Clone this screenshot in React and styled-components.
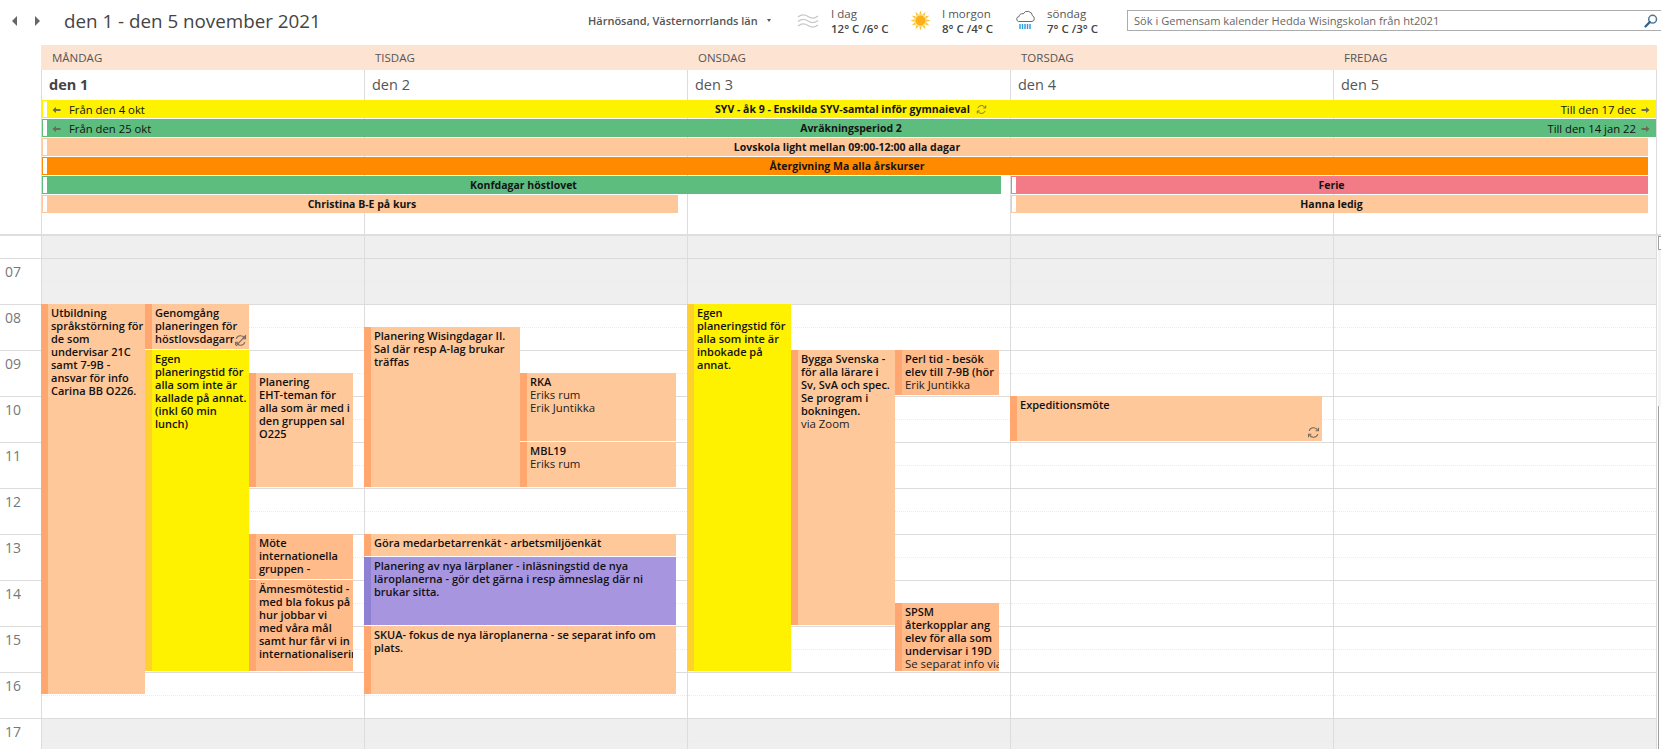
import React from "react";
import styled, { createGlobalStyle } from "styled-components";

const HOUR = 46;
const COL = 323;
const TRACK = 312;
const GRID_TOP = 236;

const yOf = (h) => 304 + (h - 8) * HOUR - GRID_TOP;

const Global = createGlobalStyle`
  html, body { margin:0; padding:0; background:#fff; }
  body { font-family:"Open Sans","Noto Sans",sans-serif; color:#222; }
`;

const Page = styled.div`
  width:1661px;
  height:749px;
  overflow:hidden;
  background:#fff;
`;

const Toolbar = styled.div`
  height:45px;
  box-sizing:border-box;
  padding-bottom:4px;
  display:flex;
  align-items:center;
`;

const Nav = styled.div`
  width:64px;
  flex:none;
  display:flex;
  gap:16px;
  padding-left:11px;
  box-sizing:border-box;
  color:#666;
`;

const Title = styled.h1`
  margin:0;
  width:524px;
  flex:none;
  font-size:18.8px;
  font-weight:400;
  color:#444;
  white-space:nowrap;
`;

const Location = styled.div`
  width:209px;
  flex:none;
  font-size:11px;
  font-weight:600;
  color:#555;
  white-space:nowrap;
  display:flex;
  align-items:center;
  gap:9px;
`;

const Caret = styled.span`
  width:0;
  height:0;
  border-left:2.5px solid transparent;
  border-right:2.5px solid transparent;
  border-top:3px solid #555;
`;

const Weather = styled.div`
  width:${(p) => p.$width}px;
  flex:none;
  display:flex;
  align-items:center;
`;

const WeatherIcon = styled.div`
  width:${(p) => p.$width}px;
  flex:none;
  display:flex;
`;

const WeatherText = styled.div`
  font-size:11.5px;
  line-height:15px;
  color:#555;
  white-space:nowrap;
  b { font-weight:600; color:#444; }
`;

const Search = styled.div`
  flex:1;
  height:21px;
  box-sizing:border-box;
  border:1px solid #acacac;
  border-right:none;
  display:flex;
  align-items:center;
  justify-content:space-between;
  padding:0 3px 0 6px;
  font-size:11.1px;
  color:#666;
  white-space:nowrap;
`;

const Head = styled.div`
  margin-left:41px;
  width:1616px;
`;

const NameRow = styled.div`
  height:25px;
  display:grid;
  grid-template-columns:repeat(5, ${COL}px);
  background:#fde3d2;
`;

const DayName = styled.div`
  padding-left:11px;
  font-size:11.5px;
  line-height:25px;
  color:#555;
`;

const DateRow = styled.div`
  height:30px;
  display:grid;
  grid-template-columns:repeat(5, ${COL}px);
  border-right:1px solid #dcdcdc;
  background-image:linear-gradient(to right, #dcdcdc 1px, transparent 1px);
  background-size:${COL}px 100%;
`;

const DayDate = styled.div`
  padding-left:8px;
  font-size:14.5px;
  line-height:30px;
  font-weight:${(p) => (p.$today ? 700 : 400)};
  color:${(p) => (p.$today ? "#444" : "#555")};
`;

const AllDay = styled.div`
  height:134px;
  box-sizing:border-box;
  display:grid;
  grid-template-columns:repeat(5, ${COL}px);
  grid-auto-rows:18px;
  row-gap:1px;
  border-right:1px solid #dcdcdc;
  background-image:linear-gradient(to right, #dcdcdc 1px, transparent 1px);
  background-size:${COL}px 100%;
`;

const Bar = styled.div`
  grid-column:${(p) => p.$from} / ${(p) => p.$to};
  margin-left:1px;
  margin-right:${(p) => p.$gap || 0}px;
  display:flex;
  background:${(p) => p.$color};
  overflow:hidden;
`;

const BarTab = styled.span`
  width:6px;
  flex:none;
  box-sizing:border-box;
  background:#fff;
  border:1px solid ${(p) => p.$color};
`;

const BarBody = styled.div`
  flex:1;
  display:grid;
  grid-template-columns:1fr auto 1fr;
  align-items:center;
  padding:1px 6px 0 4px;
  font-size:10.5px;
  line-height:17px;
  color:#111;
  white-space:nowrap;
`;

const BarTitle = styled.span`
  font-weight:700;
  color:#141414;
  display:flex;
  align-items:center;
  gap:6px;
`;

const BarSide = styled.span`
  display:flex;
  align-items:center;
  gap:${(p) => (p.$right ? 5 : 8)}px;
  font-size:11.3px;
  justify-content:${(p) => (p.$right ? "flex-end" : "flex-start")};
  svg { color:#6b6b55; flex:none; }
`;

const TimeGrid = styled.div`
  display:flex;
  border-top:2px solid #dedede;
`;

const Gutter = styled.div`
  width:41px;
  flex:none;
`;

const HourLabel = styled.div`
  height:${(p) => (p.$short ? 22 : HOUR)}px;
  box-sizing:border-box;
  border-top:${(p) => (p.$short ? "none" : "1px solid #dcdcdc")};
  padding-left:5px;
  font-size:14px;
  line-height:26px;
  color:#777;
`;

const Days = styled.div`
  display:flex;
`;

const DayColumn = styled.div`
  position:relative;
  width:${COL}px;
  box-sizing:border-box;
  border-left:1px solid #dcdcdc;
`;

const Slot = styled.div`
  height:${(p) => (p.$short ? 22 : HOUR)}px;
  box-sizing:border-box;
  border-top:${(p) => (p.$short ? "none" : "1px solid #dcdcdc")};
  background:${(p) => (p.$off ? "#efefef" : "#fff")};
  &::before {
    content:"";
    display:${(p) => (p.$short ? "none" : "block")};
    height:22px;
    border-bottom:1px dotted ${(p) => (p.$off ? "#ebebeb" : "#ececec")};
  }
`;

const Event = styled.div`
  position:absolute;
  top:${(p) => yOf(p.$start)}px;
  height:${(p) => (p.$end - p.$start) * HOUR - 1}px;
  left:${(p) => -1 + (p.$lane * TRACK) / p.$lanes}px;
  width:${(p) => ((p.$span || 1) * TRACK) / p.$lanes}px;
  box-sizing:border-box;
  padding:2px 0 0 3px;
  border-left:7px solid ${(p) => p.$accent};
  background:${(p) => p.$color};
  overflow:hidden;
  font-size:11px;
  line-height:13px;
  color:#111;
`;

const EventLine = styled.div`
  white-space:nowrap;
  font-weight:${(p) => (p.$sub ? 400 : 600)};
  font-size:${(p) => (p.$sub ? 11.4 : 11)}px;
  color:${(p) => (p.$sub ? "#222" : "#111")};
`;

const EventIcon = styled.span`
  position:absolute;
  right:2px;
  bottom:2px;
  display:flex;
  background:${(p) => p.$color};
`;

const ScrollBar = styled.div`
  flex:1;
  display:flex;
  flex-direction:column;
  padding-left:1px;
  border-left:1px solid #dcdcdc;
`;

const ScrollButton = styled.div`
  height:14px;
  box-sizing:border-box;
  border:1px solid #a0a0a0;
  border-right:none;
`;

const ScrollTrack = styled.div`
  height:156px;
  background:#f4f4f4;
`;

const ScrollThumb = styled.div`
  flex:1;
  height:400px;
  border-left:1px solid #a0a0a0;
  background:#fff;
`;

const Arrow = ({ dir }) => (
  <svg width="9" height="8" viewBox="0 0 9 8">
    <path
      d={dir === "left" ? "M0.5 4 L4 1 V3 H8.5 V5 H4 V7 Z" : "M8.5 4 L5 1 V3 H0.5 V5 H5 V7 Z"}
      fill="currentColor"
    />
  </svg>
);

const Repeat = ({ size = 11, color = "#6d6d4e", broken }) => (
  <svg width={size} height={size} viewBox="0 0 12 12" fill="none" stroke={color} strokeWidth="1">
    <path d="M2 4.5 A4.3 4.3 0 0 1 9.8 3.8" />
    <path d="M10 7.5 A4.3 4.3 0 0 1 2.2 8.2" />
    <path d="M10.6 1.6 V4.4 H7.9" />
    <path d="M1.4 10.4 V7.6 H4.1" />
    {broken && <path d="M2 11 L11 1" />}
  </svg>
);

const Waves = () => (
  <svg width="22" height="16" viewBox="0 0 22 16" fill="none" stroke="#c9c9c9" strokeWidth="1.4">
    <path d="M1 4 Q6 0 11 3.5 T21 3" />
    <path d="M1 8.5 Q6 4.5 11 8 T21 7.5" />
    <path d="M1 13 Q6 9 11 12.5 T21 12" />
  </svg>
);

const Sun = () => (
  <svg width="21" height="21" viewBox="0 0 21 21">
    {[...Array(12)].map((_, i) => (
      <path key={i} d="M9.2 4.6 L10.5 0.4 L11.8 4.6 Z" fill="#fdc52c" transform={`rotate(${i * 30} 10.5 10.5)`} />
    ))}
    <circle cx="10.5" cy="10.5" r="5.4" fill="#fbb117" stroke="#fdd65a" strokeWidth="1" />
  </svg>
);

const RainCloud = () => (
  <svg width="21" height="21" viewBox="0 0 21 21" fill="none">
    <path
      d="M3.5 11.5 H17 A3 3 0 0 0 17.5 5.8 A5 5 0 0 0 8.2 3.8 A3.2 3.2 0 0 0 4 6.6 A2.5 2.5 0 0 0 3.5 11.5 Z"
      stroke="#6b6b6b"
      strokeWidth="1"
    />
    {[5, 7.5, 10, 12.5, 15].map((x) => (
      <path key={x} d={`M${x} 14 V19`} stroke="#2c9bd6" strokeWidth="1.4" />
    ))}
  </svg>
);

const Magnifier = () => (
  <svg width="14" height="14" viewBox="0 0 14 14" fill="none">
    <circle cx="8.6" cy="5.2" r="3.9" stroke="#4d7796" strokeWidth="1.5" />
    <path d="M5.8 8 L1.5 12.4" stroke="#2f5f85" strokeWidth="2.2" strokeLinecap="round" />
  </svg>
);

const NavArrow = ({ flip }) => (
  <svg width="7" height="10" viewBox="0 0 7 10">
    <path d={flip ? "M1 0 L6 5 L1 10 Z" : "M6 0 L1 5 L6 10 Z"} fill="currentColor" />
  </svg>
);

const PEACH = { $color: "#ffc89b", $accent: "#ffa76e" };
const SALMON = { $color: "#ffbb8a", $accent: "#ffa671" };
const YELLOW = { $color: "#fff200", $accent: "#ffd02e" };
const PURPLE = { $color: "#a895e0", $accent: "#8e80d2" };

const GREEN_BAR = "#5cbd7f";
const YELLOW_BAR = "#fff200";
const PEACH_BAR = "#ffc89b";
const ORANGE_BAR = "#ff8a00";
const PINK_BAR = "#f37a87";

const names = ["MÅNDAG", "TISDAG", "ONSDAG", "TORSDAG", "FREDAG"];
const dates = ["den 1", "den 2", "den 3", "den 4", "den 5"];

const bars = [
  { from: 1, to: 6, color: YELLOW_BAR, title: "SYV - åk 9 - Enskilda SYV-samtal inför gymnaieval", left: "Från den 4 okt", right: "Till den 17 dec", repeat: true },
  { from: 1, to: 6, color: GREEN_BAR, title: "Avräkningsperiod 2", left: "Från den 25 okt", right: "Till den 14 jan 22" },
  { from: 1, to: 6, gap: 8, color: PEACH_BAR, title: "Lovskola light mellan 09:00-12:00 alla dagar" },
  { from: 1, to: 6, gap: 8, color: ORANGE_BAR, title: "Återgivning Ma alla årskurser" },
  { from: 1, to: 4, gap: 9, color: GREEN_BAR, title: "Konfdagar höstlovet" },
  { from: 4, to: 6, gap: 8, color: PINK_BAR, title: "Ferie" },
  { from: 1, to: 3, gap: 9, color: PEACH_BAR, title: "Christina B-E på kurs" },
  { from: 4, to: 6, gap: 8, color: PEACH_BAR, title: "Hanna ledig" },
];

const events = [
  [
    { start: 8, end: 16.5, lane: 0, lanes: 3, kind: PEACH, lines: ["Utbildning", "språkstörning för", "de som", "undervisar 21C", "samt 7-9B -", "ansvar för info", "Carina BB O226."] },
    { start: 8, end: 9, lane: 1, lanes: 3, kind: PEACH, lines: ["Genomgång", "planeringen för", "höstlovsdagarna"], icon: "broken" },
    { start: 9, end: 16, lane: 1, lanes: 3, kind: YELLOW, lines: ["Egen", "planeringstid för", "alla som inte är", "kallade på annat.", "(inkl 60 min", "lunch)"] },
    { start: 9.5, end: 12, lane: 2, lanes: 3, kind: PEACH, lines: ["Planering", "EHT-teman för", "alla som är med i", "den gruppen sal", "O225"] },
    { start: 13, end: 14, lane: 2, lanes: 3, kind: SALMON, lines: ["Möte", "internationella", "gruppen -"] },
    { start: 14, end: 16, lane: 2, lanes: 3, kind: SALMON, lines: ["Ämnesmötestid -", "med bla fokus på", "hur jobbar vi", "med våra mål", "samt hur får vi in", "internationalisering"] },
  ],
  [
    { start: 8.5, end: 12, lane: 0, lanes: 2, kind: PEACH, lines: ["Planering Wisingdagar II.", "Sal där resp A-lag brukar", "träffas"] },
    { start: 9.5, end: 11, lane: 1, lanes: 2, kind: PEACH, lines: ["RKA"], sub: ["Eriks rum", "Erik Juntikka"] },
    { start: 11, end: 12, lane: 1, lanes: 2, kind: PEACH, lines: ["MBL19"], sub: ["Eriks rum"] },
    { start: 13, end: 13.5, lane: 0, lanes: 2, span: 2, kind: PEACH, lines: ["Göra medarbetarrenkät - arbetsmiljöenkät"] },
    { start: 13.5, end: 15, lane: 0, lanes: 2, span: 2, kind: PURPLE, lines: ["Planering av nya lärplaner - inläsningstid de nya", "läroplanerna - gör det gärna i resp ämneslag där ni", "brukar sitta."] },
    { start: 15, end: 16.5, lane: 0, lanes: 2, span: 2, kind: PEACH, lines: ["SKUA- fokus de nya läroplanerna - se separat info om", "plats."] },
  ],
  [
    { start: 8, end: 16, lane: 0, lanes: 3, kind: YELLOW, lines: ["Egen", "planeringstid för", "alla som inte är", "inbokade på", "annat."] },
    { start: 9, end: 15, lane: 1, lanes: 3, kind: PEACH, lines: ["Bygga Svenska -", "för alla lärare i", "Sv, SvA och spec.", "Se program i", "bokningen."], sub: ["via Zoom"] },
    { start: 9, end: 10, lane: 2, lanes: 3, kind: SALMON, lines: ["Perl tid - besök", "elev till 7-9B (hör"], sub: ["Erik Juntikka"] },
    { start: 14.5, end: 16, lane: 2, lanes: 3, kind: SALMON, lines: ["SPSM", "återkopplar ang", "elev för alla som", "undervisar i 19D"], sub: ["Se separat info via"] },
  ],
  [
    { start: 10, end: 11, lane: 0, lanes: 1, kind: PEACH, lines: ["Expeditionsmöte"], icon: "repeat" },
  ],
  [],
];

const hours = [
  { off: true, short: true, label: "" },
  { off: true, label: "07" },
  { label: "08" },
  { label: "09" },
  { label: "10" },
  { label: "11" },
  { label: "12" },
  { label: "13" },
  { label: "14" },
  { label: "15" },
  { label: "16" },
  { off: true, label: "17" },
];

export default function App() {
  return (
    <Page>
      <Global />
      <Toolbar>
        <Nav>
          <NavArrow />
          <NavArrow flip />
        </Nav>
        <Title>den 1 - den 5 november 2021</Title>
        <Location>
          Härnösand, Västernorrlands län
          <Caret />
        </Location>
        <Weather $width={113}>
          <WeatherIcon $width={34}><Waves /></WeatherIcon>
          <WeatherText>I dag<br /><b>12° C /6° C</b></WeatherText>
        </Weather>
        <Weather $width={105}>
          <WeatherIcon $width={32}><Sun /></WeatherIcon>
          <WeatherText>I morgon<br /><b>8° C /4° C</b></WeatherText>
        </Weather>
        <Weather $width={112}>
          <WeatherIcon $width={32}><RainCloud /></WeatherIcon>
          <WeatherText>söndag<br /><b>7° C /3° C</b></WeatherText>
        </Weather>
        <Search>
          Sök i Gemensam kalender Hedda Wisingskolan från ht2021
          <Magnifier />
        </Search>
      </Toolbar>

      <Head>
        <NameRow>
          {names.map((n) => <DayName key={n}>{n}</DayName>)}
        </NameRow>
        <DateRow>
          {dates.map((d, i) => <DayDate key={d} $today={i === 0}>{d}</DayDate>)}
        </DateRow>
        <AllDay>
          {bars.map((b) => (
            <Bar key={b.title} $from={b.from} $to={b.to} $gap={b.gap} $color={b.color}>
              <BarTab $color={b.color} />
              <BarBody>
                <BarSide>
                  {b.left && <><Arrow dir="left" />{b.left}</>}
                </BarSide>
                <BarTitle>
                  {b.title}
                  {b.repeat && <Repeat />}
                </BarTitle>
                <BarSide $right>
                  {b.right && <>{b.right}<Arrow dir="right" /></>}
                </BarSide>
              </BarBody>
            </Bar>
          ))}
        </AllDay>
      </Head>

      <TimeGrid>
        <Gutter>
          {hours.map((h, i) => (
            <HourLabel key={i} $short={h.short}>{h.label}</HourLabel>
          ))}
        </Gutter>
        <Days>
          {events.map((list, d) => (
            <DayColumn key={d}>
              {hours.map((h, i) => <Slot key={i} $off={h.off} $short={h.short} />)}
              {list.map((e) => (
                <Event
                  key={e.lines[0] + e.start}
                  $start={e.start}
                  $end={e.end}
                  $lane={e.lane}
                  $lanes={e.lanes}
                  $span={e.span}
                  {...e.kind}
                >
                  {e.lines.map((l) => <EventLine key={l}>{l}</EventLine>)}
                  {e.sub && e.sub.map((l) => <EventLine key={l} $sub>{l}</EventLine>)}
                  {e.icon && (
                    <EventIcon $color={e.kind.$color}>
                      <Repeat size={13} color="#7a6a5a" broken={e.icon === "broken"} />
                    </EventIcon>
                  )}
                </Event>
              ))}
            </DayColumn>
          ))}
        </Days>
        <ScrollBar>
          <ScrollButton />
          <ScrollTrack />
          <ScrollThumb />
        </ScrollBar>
      </TimeGrid>
    </Page>
  );
}
